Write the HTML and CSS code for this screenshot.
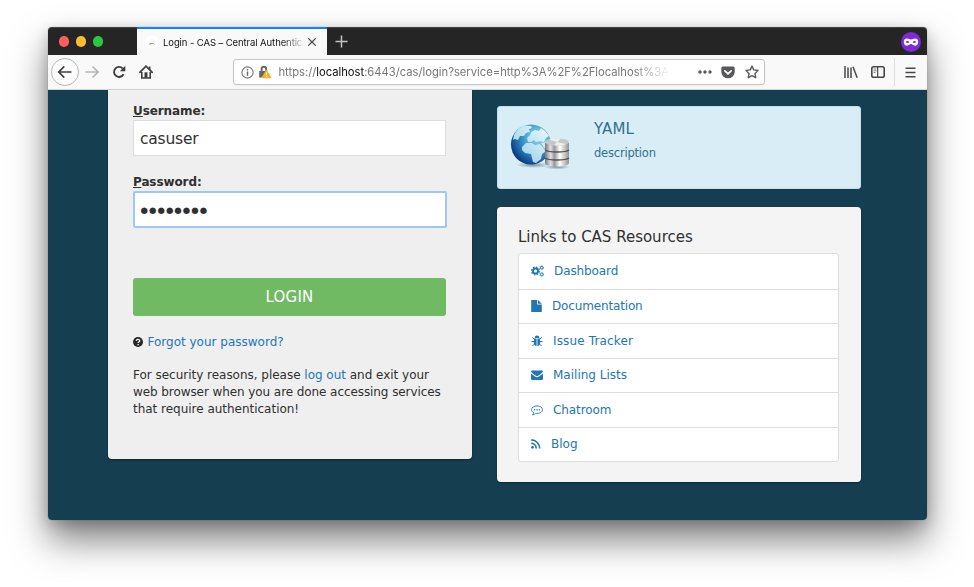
FILE: index.html
```html
<!DOCTYPE html>
<html lang="en">
<head>
<meta charset="utf-8">
<title>Login - CAS – Central Authentication Service</title>
<link rel="stylesheet" href="styles.css">
</head>
<body>
<div class="window">
  <header class="tabbar">
    <div class="lights"><i class="red"></i><i class="yellow"></i><i class="green"></i></div>
    <div class="tab">
      <svg class="favicon" width="14" height="14" viewBox="0 0 14 14"><circle cx="7" cy="7" r="5" fill="none" stroke="#fff" stroke-width="3"/><path d="M5 10V8.500H6.500M6.500 8.500Q8 7.500 9.500 9.500" fill="none" stroke="#6abf69"/></svg>
      <span class="tab-title">Login - CAS – Central Authentic</span>
      <svg class="close" width="10" height="10" viewBox="0 0 10 10"><path d="M1.300 1.300 8.700 8.700M8.700 1.300 1.300 8.700" stroke="#3b3b3d" stroke-width="1.200"/></svg>
    </div>
    <svg class="plus" width="13" height="13" viewBox="0 0 13 13"><path d="M6.500 .5v12M.5 6.500h12" stroke="#c4c4c4" stroke-width="1.500"/></svg>
    <svg class="mask" width="20" height="20" viewBox="0 0 20 20"><circle cx="10" cy="10" r="10" fill="#8029d8"/><path fill="#fff" fill-rule="evenodd" d="M6 6.600c2 0 2.600.8 4 .8s2-.8 4-.8c1.900 0 3.200.8 3.200 3.100 0 2.500-1.300 4-3.200 4-1.800 0-2.800-1.600-4-1.600s-2.200 1.600-4 1.600c-1.900 0-3.200-1.500-3.200-4C2.800 7.400 4.100 6.600 6 6.600zM4.700 10c1 1.200 2.700 1.200 3.700.2C7.600 8.700 5.600 8.600 4.700 10zm6.900.2c1 1 2.700 1 3.700-.2-.9-1.400-2.900-1.300-3.700.2z"/></svg>
  </header>
  <nav class="toolbar">
    <span class="back"><svg width="16" height="14" viewBox="0 0 16 14"><path d="M7.300 1.300 1.700 7l5.600 5.700M2 7h12.500" fill="none" stroke="#3e3e40" stroke-width="1.700"/></svg></span>
    <svg class="forward" width="14" height="14" viewBox="0 0 14 14"><path d="M7.500 1.500 13 7l-5.500 5.500M.5 7h12" fill="none" stroke="#b5b5b6" stroke-width="1.600"/></svg>
    <svg class="reload" width="14" height="14" viewBox="0 0 14 14"><path d="M11.500 9.200A5 5 0 1 1 10.800 3.600" fill="none" stroke="#3e3e40" stroke-width="1.900"/><path d="M13.300.8v5.500H7.800z" fill="#3e3e40"/></svg>
    <svg class="home" width="14" height="14" viewBox="0 0 14 14"><path d="M.8 7.400 7 1.200l6.200 6.200" fill="none" stroke="#3e3e40" stroke-width="1.700" stroke-linecap="round"/><path d="M2.800 7v6h8.400V7" fill="none" stroke="#3e3e40" stroke-width="1.600"/><path d="M5.500 7.300h3v5.500h-3z" fill="#3e3e40"/><path d="M9.800 1.500h1.700V5L9.800 3.500z" fill="#3e3e40"/></svg>
    <div class="urlbar">
      <svg width="13" height="13" viewBox="0 0 13 13"><circle cx="6.500" cy="6.500" r="5.600" fill="none" stroke="#777" stroke-width="1.100"/><path d="M5.800 5.500h1.400v4.300H5.800zM5.800 3h1.400v1.500H5.800z" fill="#666"/></svg>
      <svg class="lock" width="14" height="14" viewBox="0 0 14 14"><path d="M3.600 6.500V4a2.300 2.300 0 0 1 4.600 0v3" fill="none" stroke="#666" stroke-width="1.900"/><path d="M1.200 6h8v6.500h-8z" fill="#666"/><path d="M8.500 5.500 12.600 12.500H4.400z" fill="#ffae1f" stroke="#ffae1f" stroke-width="1.400" stroke-linejoin="round"/><path d="M8 7.200h1v3H8zM8 11h1v1H8z" fill="#fff"/></svg>
      <span class="url">https://<b>localhost</b>:6443/cas/login?service=http%3A%2F%2Flocalhost%3A</span>
      <svg class="dots" width="14" height="4" viewBox="0 0 14 4"><g fill="#58585a"><circle cx="2" cy="2" r="1.700"/><circle cx="7" cy="2" r="1.700"/><circle cx="12" cy="2" r="1.700"/></g></svg>
      <svg class="pocket" width="14" height="13" viewBox="0 0 14 13"><path d="M2 .5h10a1.700 1.700 0 0 1 1.700 1.700V6A6.700 6.300 0 0 1 .3 6V2.200A1.700 1.700 0 0 1 2 .5z" fill="#58585a"/><path d="m3.900 4.800 3.100 3 3.100-3" fill="none" stroke="#fff" stroke-width="1.700" stroke-linecap="round" stroke-linejoin="round"/></svg>
      <svg class="star" width="14" height="14" viewBox="0 0 14 14"><path d="m7 1.100 1.800 3.800 4.200.6-3 3 .7 4.200L7 10.700l-3.700 2 .7-4.200-3-3 4.200-.6z" fill="none" stroke="#58585a" stroke-width="1.400" stroke-linejoin="round"/></svg>
    </div>
    <svg class="library" width="14" height="12" viewBox="0 0 14 12"><path d="M1 0v12M4 1.500V12M7 1.500V12M9 .8l4.200 10.900" fill="none" stroke="#48484a" stroke-width="1.500"/></svg>
    <svg class="sidebar" width="14" height="12" viewBox="0 0 14 12"><rect x=".8" y=".8" width="12.400" height="10.400" rx="1.800" fill="none" stroke="#48484a" stroke-width="1.600"/><path d="M6.700 1v10" stroke="#48484a" stroke-width="1.200"/><path d="M2.500 3h3M2.500 4.800h3M2.500 6.600h2" stroke="#777" stroke-width=".9"/></svg>
    <i class="divider"></i>
    <svg class="menu" width="11" height="11" viewBox="0 0 11 11"><path d="M.5 1.200h10M.5 5.500h10M.5 9.800h10" stroke="#48484a" stroke-width="1.500"/></svg>
  </nav>
  <main class="page">
    <section class="login">
      <label><u>U</u>sername:</label>
      <div class="field">casuser</div>
      <label class="second"><u>P</u>assword:</label>
      <div class="field focused"><span class="dots-text">●●●●●●●●</span></div>
      <div class="submit"><span>LOGIN</span></div>
      <p class="forgot"><svg width="10" height="10" viewBox="0 0 10 10"><circle cx="5" cy="5" r="5" fill="#292929"/><path d="M3.300 3.900C3.400 1.800 6.800 2 6.700 3.900 6.600 5 5.100 4.900 5.100 6.100" fill="none" stroke="#efefef" stroke-width="1.300"/><path d="M4.400 6.900h1.400v1.300H4.400z" fill="#efefef"/></svg><a>Forgot your password?</a></p>
      <p class="notice"><span>For security reasons, please <a>log out</a> and exit your</span><br><span class="l2">web browser when you are done accessing services</span><br><span>that require authentication!</span></p>
    </section>
    <aside class="side">
      <section class="service">
        <svg class="globe" width="60" height="48" viewBox="0 0 60 48">
          <defs>
            <radialGradient id="sea" cx=".68" cy=".32" r=".78"><stop offset="0" stop-color="#9de0f2"/><stop offset=".4" stop-color="#4ba5d0"/><stop offset=".75" stop-color="#1a62a5"/><stop offset="1" stop-color="#082e6b"/></radialGradient>
            <linearGradient id="land" x1="1" y1="0" x2="0" y2="1"><stop offset="0" stop-color="#f0fbfd"/><stop offset="1" stop-color="#8ccbe4"/></linearGradient>
            <linearGradient id="metal"><stop offset="0" stop-color="#777"/><stop offset=".23" stop-color="#dedede"/><stop offset=".4" stop-color="#999"/><stop offset=".62" stop-color="#fff"/><stop offset="1" stop-color="#929292"/></linearGradient>
            <radialGradient id="shade"><stop offset="0" stop-color="#46606c" stop-opacity=".65"/><stop offset="1" stop-color="#46606c" stop-opacity="0"/></radialGradient>
          </defs>
          <ellipse cx="23" cy="42" rx="17" ry="3" fill="url(#shade)"/><ellipse cx="47" cy="44" rx="13" ry="2.500" fill="url(#shade)"/>
          <circle cx="21" cy="21.500" r="20" fill="url(#sea)"/>
          <path fill="url(#land)" d="M4 12C7 6 11 3 16 2.500l5 .5 1 2-3 1 1 3-4 1-2 3-4 0-2 4-3-1-2 1zM17 15l3-3 1-3 4-2 4 1 2-3 4 3 4 5-3 2-2 4-5-1-3 1-2-2-3 2-3 0zM12 24l4-4 6 0 3 2 5-1 6 7-4 3-1 5-5 4-3-1-2-8-6-1-3-3zM31 20l5-1 3 4-1 4-4-2z"/>
          <path d="M35 20v20c0 2 5.500 3.500 12 3.500S59 42 59 40V20z" fill="url(#metal)"/>
          <path d="M35 27c2 1.500 5.500 2 12 2S57 28.500 59 27M35 35c2 1.500 5.500 2 12 2S57 36.500 59 35" fill="none" stroke="#525252" stroke-width="1.400"/>
          <ellipse cx="47" cy="19" rx="12" ry="3.500" fill="#c4c8c9"/><path d="m47 19-8-2.500c4-1.500 8-1.300 12-.7zM47 19l9 2c-4 2-8 2-12 1.200z" fill="#eee"/>
        </svg>
        <div><h2>YAML</h2><p>description</p></div>
      </section>
      <section class="resources">
        <h3>Links to CAS Resources</h3>
        <ul>
          <li><svg width="13" height="12" viewBox="0 0 13 12"><circle cx="4.500" cy="6" r="2.500" fill="none" stroke="currentColor" stroke-width="1.900"/><circle cx="4.500" cy="6" r="3.900" fill="none" stroke="currentColor" stroke-width="1.300" stroke-dasharray="1.600 1.463"/><g fill="none" stroke="currentColor"><circle cx="10.700" cy="2.700" r="1.300"/><circle cx="10.700" cy="9.400" r="1.300"/><circle cx="10.700" cy="2.700" r="2" stroke-width=".7" stroke-dasharray="1 1.090"/><circle cx="10.700" cy="9.400" r="2" stroke-width=".7" stroke-dasharray="1 1.090"/></g></svg><a class="dash">Dashboard</a></li>
          <li><svg width="11" height="12" viewBox="0 0 11 12"><path d="M.2 0h6v4.500h4.600V12H.2zM7 0l3.800 3.700H7z" fill="currentColor"/></svg><a class="docs">Documentation</a></li>
          <li><svg width="12" height="12" viewBox="0 0 12 12"><path d="M3.600 3a2.400 2.400 0 0 1 4.800 0zM3 3.600h2.600V11C3.700 11 2.800 9.200 2.800 7.500zM6.400 3.600H9l.2 3.900c0 1.700-.9 3.500-2.800 3.500z" fill="currentColor"/><path d="M1.300 2.500 3.500 4.300M10.700 2.500 8.500 4.300M.5 6.500h3M11.500 6.500h-3M1.500 11l2-2M10.500 11l-2-2" stroke="currentColor" fill="none"/></svg><a class="issue">Issue Tracker</a></li>
          <li><svg width="12" height="12" viewBox="0 0 12 12"><path d="M0 2.500Q0 1.500 1 1.500h10q1 0 1 1c0 1-2.500 2.500-4.500 4Q6 7.600 4.500 6.500C2.500 5 0 3.500 0 2.500zM0 4.600 4 7.500Q6 9 8 7.500l4-2.900V10q0 1-1 1H1q-1 0-1-1z" fill="currentColor"/></svg><a class="mail">Mailing Lists</a></li>
          <li><svg width="12" height="12" viewBox="0 0 12 12"><path d="M6 1.900c3 0 5.500 1.600 5.500 3.800S9 9.500 6 9.500q-.8 0-1.500-.2Q3.200 10.800 1.500 11q1-1 1.100-2.400C1.300 7.900.5 6.900.5 5.700.5 3.500 3 1.900 6 1.900z" fill="none" stroke="currentColor" stroke-width=".9"/><g fill="currentColor"><circle cx="3.600" cy="5.700" r=".75"/><circle cx="6" cy="5.700" r=".75"/><circle cx="8.400" cy="5.700" r=".75"/></g></svg><a class="chat">Chatroom</a></li>
          <li><svg width="10" height="12" viewBox="0 0 10 12"><circle cx="1.500" cy="9.300" r="1.400" fill="currentColor"/><path d="M.2 5.200a5.300 5.300 0 0 1 5 5.400M.2 1.900a8.600 8.600 0 0 1 8.500 8.700" fill="none" stroke="currentColor" stroke-width="1.600"/></svg><a class="blog">Blog</a></li>
        </ul>
      </section>
    </aside>
  </main>
</div>
</body>
</html>
```

FILE: styles.css
```css
* { box-sizing: border-box; }
body { margin: 0; height: 587px; overflow: hidden; background: #fff; padding: 27px 47px 0 47.500px; font-family: "DejaVu Sans", sans-serif; color: #303030; }
svg { display: block; flex: none; }
h2, h3, p, ul { margin: 0; padding: 0; font-weight: 400; }
.window { height: 493px; border-radius: 4px; box-shadow: 0 20px 36px rgba(0,0,0,.5), 0 4px 14px rgba(0,0,0,.18), 0 0 1px rgba(0,0,0,.4); display: flex; flex-direction: column; }
.tabbar { height: 28px; flex: none; background: #252525; border-radius: 4px 4px 0 0; display: flex; align-items: center; border-top: 1px solid #444; }
.lights { width: 89.500px; padding-left: 11px; display: flex; gap: 6.500px; }
.lights i { width: 10.500px; height: 10.500px; border-radius: 50%; }
.red { background: #ff5f57; }
.yellow { background: #ffbd2e; }
.green { background: #28c940; }
.tab { width: 190px; height: 28px; margin-top: -1px; background: #f9f9fa; border-top: 2px solid #0a84ff; display: flex; align-items: center; padding-left: 8px; font-family: Inter, sans-serif; color: #111; }
.tab-title { width: 140px; margin-left: 4px; white-space: nowrap; letter-spacing: -.09px; font-size: 9.500px; mask-image: linear-gradient(90deg, #000 118px, rgba(0,0,0,.15) 140px); }
.close { margin-left: 4px; }
.plus { margin-left: 7.500px; }
.mask { margin-left: auto; margin-right: 6px; }
.toolbar { height: 35px; flex: none; background: #f9f9fa; border-bottom: 1px solid #d5d5d6; display: flex; align-items: center; padding: 0 10px 0 3px; }
.back { width: 28px; height: 28px; border: 1px solid #b5b5b6; border-radius: 50%; background: #fff; display: flex; align-items: center; justify-content: center; }
.forward { margin-left: 6.500px; }
.reload { margin-left: 13.300px; }
.home { margin-left: 12.700px; }
.urlbar { width: 532px; height: 26px; margin-left: 80px; border: 1px solid #c5c5c6; border-radius: 3px; background: #fff; display: flex; align-items: center; padding-left: 7px; box-shadow: 0 1px 2px rgba(0,0,0,.05); }
.lock { margin-left: 4.500px; }
.url { width: 390px; margin-left: 6px; white-space: nowrap; font: 11.250px Inter, sans-serif; letter-spacing: -.02px; color: #777; mask-image: linear-gradient(90deg, #000 355px, rgba(0,0,0,.1) 389px); }
.url b { color: #0c0c0d; font-weight: 400; }
.dots { margin-left: 29.500px; }
.pocket { margin-left: 9.500px; }
.star { margin-left: 9.500px; }
.library { margin-left: 79.500px; }
.sidebar { margin-left: 12.500px; }
.divider { width: 1px; height: 28px; margin-left: 9px; background: #dededf; }
.menu { margin-left: 10.500px; }
.page { flex: 1; background: #153e50; border-radius: 0 0 4px 4px; display: flex; align-items: flex-start; padding-left: 60.500px; gap: 25.500px; }
.login { width: 363.500px; height: 368.500px; background: #efefef; border-radius: 0 0 4px 4px; padding: 13px 25.500px 0 25px; box-shadow: 0 1px 2px rgba(0,0,0,.4); }
label { display: block; font: bold 12px/16px "DejaVu Sans", sans-serif; letter-spacing: -.1px; }
label.second { margin-top: 18px; }
.field { height: 36px; margin-top: 1px; border: 1px solid #ddd; background: #fff; font-size: 15.500px; line-height: 37px; padding-left: 6px; letter-spacing: -.2px; }
.focused { height: 37px; border: 2px solid #9bc8f8; border-radius: 2px; margin-right: -1px; line-height: 34px; padding-left: 5.500px; }
.dots-text { display: block; font-size: 8.500px; letter-spacing: 1.050px; line-height: 34px; }
.submit { height: 38px; margin-top: 50px; background: #70ba63; border-radius: 3px; color: #fff; font-size: 15px; line-height: 38px; text-align: center; letter-spacing: .2px; }
.forgot { display: flex; align-items: center; gap: 4.500px; margin-top: 17px; height: 17px; font-size: 12px; }
a { color: #2277b3; }
.notice { margin-top: 17px; font-size: 12px; line-height: 17px; white-space: nowrap; letter-spacing: -.02px; }
.l2 { letter-spacing: -.08px; }
.side { width: 363.500px; padding-top: 16.400px; }
.service { height: 83px; border-radius: 3px; background: #d9edf7; display: flex; padding: 16px 0 0 11.500px; color: #31708f; border: 1px solid #c0dfe9; }
.service div { margin-left: 24.500px; margin-top: -4.500px; }
.service h2 { font-size: 15px; line-height: 20px; letter-spacing: .1px; }
.service p { font-size: 11.500px; line-height: 16px; margin-top: 6px; letter-spacing: -.2px; }
.resources { height: 275.600px; margin-top: 17.500px; background: #f4f4f4; border-radius: 4px; padding: 20.200px 21.500px 0 21px; box-shadow: 0 1px 2px rgba(0,0,0,.4); }
.resources h3 { font-size: 15px; line-height: 20px; letter-spacing: 0; }
.resources ul { margin-top: 6px; list-style: none; border: 1px solid #ddd; border-radius: 3px; background: #fff; }
.resources li { height: 34.500px; display: flex; align-items: center; gap: 10px; padding-left: 12px; font-size: 12px; color: #2277b3; }
.resources li + li { border-top: 1px solid #ddd; }
.docs { letter-spacing: -.15px; }
.dash, .chat { letter-spacing: -.1px; }
.issue { letter-spacing: .15px; }
```
